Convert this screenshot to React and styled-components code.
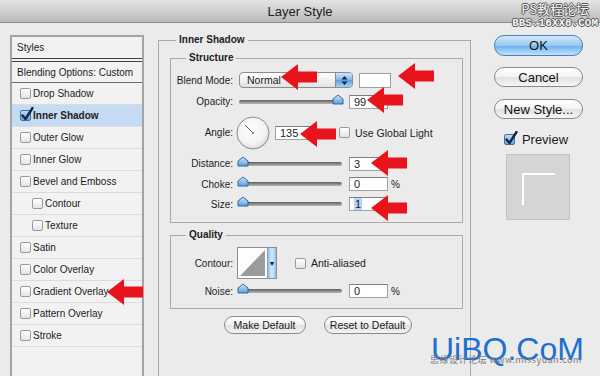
import React from 'react'
import styled, {createGlobalStyle} from 'styled-components'

const GlobalStyle = createGlobalStyle`
  html, body { margin: 0; padding: 0; }
  body {
    width: 600px;
    height: 376px;
    overflow: hidden;
    background: #ebebeb;
    font-family: "Liberation Sans", Arial, sans-serif;
    color: #1c1c1c;
  }
`

const Window = styled.div`
  position: relative;
  width: 600px;
  height: 376px;
  overflow: hidden;
  background: #ebebeb;
`

const TitleBar = styled.div`
  height: 22px;
  display: flex;
  align-items: center;
  justify-content: center;
  background: linear-gradient(#e4e4e4, #bababa);
  border-bottom: 1px solid #8e8e8e;
  font-size: 13px;
  color: #222;
`

const Body = styled.div`
  display: flex;
  align-items: flex-start;
  padding: 10px 0 0 10px;
`

/* ---------- left styles list ---------- */

const StylesPanel = styled.div`
  flex-shrink: 0;
  box-sizing: border-box;
  width: 134px;
  height: 360px;
  margin-top: 2px;
  border: 2px solid #a4a4a4;
  background: #f2f2f2;
  font-size: 10px;
`

const PanelHead = styled.div`
  height: 21px;
  display: flex;
  align-items: center;
  padding-left: 5px;
`

const DoubleRule = styled.div`
  height: 2px;
  border-top: 1px solid #404040;
  border-bottom: 1px solid #404040;
`

const BlendingRow = styled.div`
  height: 20px;
  display: flex;
  align-items: center;
  padding-left: 5px;
  border-bottom: 1px solid #6e6e6e;
`

const Item = styled.div`
  height: 21px;
  display: flex;
  align-items: center;
  gap: 2px;
  padding-left: ${p => (p.$indent ? 20 : 8)}px;
  border-bottom: 1px solid #dcdcdc;
  background: ${p => (p.$active ? '#c5dbf3' : 'transparent')};
  font-weight: ${p => (p.$active ? 'bold' : 'normal')};
`

const Box = styled.span`
  position: relative;
  flex-shrink: 0;
  box-sizing: border-box;
  width: 11px;
  height: 11px;
  border: 1px solid ${p => (p.$checked ? '#4a6f99' : '#9a9a9a')};
  border-radius: 2px;
  background: ${p => (p.$checked ? 'linear-gradient(#bcdcf8, #6aa8e4)' : 'linear-gradient(#ffffff, #e4e4e4)')};
`

const Tick = styled.svg`
  position: absolute;
  left: 0;
  top: -4px;
`

const Checkbox = ({checked}) => (
  <Box $checked={checked}>
    {checked && (
      <Tick width="13" height="14" viewBox="0 0 13 14">
        <path d="M1.5 8.5 L4.5 12 L11.5 1" fill="none" stroke="#12284a" strokeWidth="2.4" strokeLinecap="round" strokeLinejoin="round" />
      </Tick>
    )}
  </Box>
)

/* ---------- middle settings ---------- */

const EffectSet = styled.fieldset`
  flex-shrink: 0;
  box-sizing: border-box;
  width: 313px;
  min-width: 0;
  min-height: 380px;
  margin: 0 0 0 14px;
  padding: 0 7px 0 11px;
  border: 1px solid #aaaaaa;
`

const Legend = styled.legend`
  font-size: 10px;
  font-weight: bold;
  line-height: 14px;
  padding: 0 3px;
  margin-left: ${p => p.$offset}px;
`

const Group = styled.fieldset`
  min-width: 0;
  margin: ${p => p.$top || 0}px 0 0 0;
  padding: ${p => p.$pad};
  border: 1px solid #aaaaaa;
`

const Row = styled.div`
  display: flex;
  align-items: center;
  height: ${p => p.$h}px;
  font-size: 10px;
`

const Label = styled.span`
  flex-shrink: 0;
  width: 62px;
  margin-right: ${p => p.$gap ?? 6}px;
  text-align: right;
`

const Select = styled.div`
  box-sizing: border-box;
  width: 114px;
  height: 16px;
  display: flex;
  align-items: center;
  border: 1px solid #8c8c8c;
  border-radius: 4px;
  background: linear-gradient(#ffffff, #f1f1f1 50%, #e2e2e2);
  font-size: 10.5px;
  overflow: hidden;
`

const SelectText = styled.span`
  flex: 1;
  padding-left: 7px;
`

const Stepper = styled.span`
  width: 16px;
  height: 100%;
  display: flex;
  align-items: center;
  justify-content: center;
  border-left: 1px solid #6f8fb4;
  background: linear-gradient(#d2e6fa, #7fb4e6 50%, #5c9edd 51%, #a9d1f6);
`

const Swatch = styled.span`
  box-sizing: border-box;
  width: 32px;
  height: 15px;
  margin-left: 6px;
  background: #fff;
  border: 1px solid #9d9d9d;
`

const Track = styled.div`
  position: relative;
  width: 103px;
  height: 4px;
  border-radius: 2px;
  background: linear-gradient(#5e5e5e, #b8b8b8);
`

const Thumb = styled.svg`
  position: absolute;
  top: -6px;
  left: ${p => p.$pos}px;
`

const Slider = ({value}) => (
  <Track>
    <Thumb $pos={value > 50 ? 93 : -2} width="12" height="11" viewBox="0 0 12 11">
      <defs>
        <linearGradient id="tg" x1="0" y1="0" x2="0" y2="1">
          <stop offset="0" stopColor="#cfe6fb" />
          <stop offset="1" stopColor="#5b9de0" />
        </linearGradient>
      </defs>
      <path d="M1 10 V5 L6 1 L11 5 V10 Z" fill="url(#tg)" stroke="#35679e" strokeWidth="1" />
    </Thumb>
  </Track>
)

const Field = styled.span`
  box-sizing: border-box;
  width: ${p => p.$w || 39}px;
  height: 14px;
  margin-left: ${p => p.$ml ?? 6}px;
  padding-left: 4px;
  display: flex;
  align-items: center;
  background: #fff;
  border: 1px solid #a2a2a2;
  border-top-color: #7d7d7d;
  font-size: 11px;
`

const Picked = styled.span`
  background: #b6d4fb;
  padding: 0 1px;
`

const Unit = styled.span`
  margin-left: 3px;
  font-size: 10px;
`

const Dial = styled.svg`
  margin-left: -3px;
`

const Option = styled.span`
  display: flex;
  align-items: center;
  gap: 5px;
  margin-left: ${p => p.$ml}px;
  font-size: 10.5px;
`

const ContourPick = styled.div`
  display: flex;
  height: 30px;
  margin-left: -2px;
  border: 1px solid #8e8e8e;
`

const ContourDrop = styled.span`
  width: 8px;
  display: flex;
  align-items: center;
  justify-content: center;
  border-left: 1px solid #7c9cc0;
  background: linear-gradient(90deg, #8fc0ee, #d8ebfb, #8fc0ee);
  font-size: 7px;
  color: #0e1e36;
`

const ButtonRow = styled.div`
  display: flex;
  justify-content: center;
  gap: 18px;
  margin-top: 7px;
  padding-left: 2px;
`

const SmallButton = styled.button`
  box-sizing: border-box;
  width: ${p => p.$w}px;
  height: 18px;
  padding: 0;
  border: 1px solid #8a8a8a;
  border-radius: 9px;
  background: linear-gradient(#ffffff, #f0f0f0 50%, #e0e0e0 51%, #f4f4f4);
  font-family: inherit;
  font-size: 10.5px;
  color: #1c1c1c;
`

/* ---------- right column ---------- */

const Side = styled.div`
  flex-shrink: 0;
  width: 89px;
  margin: 2px 0 0 23px;
  display: flex;
  flex-direction: column;
  align-items: center;
`

const PushButton = styled.button`
  box-sizing: border-box;
  width: 89px;
  height: ${p => p.$h || 20}px;
  margin-top: ${p => p.$mt || 0}px;
  padding: 0;
  border: 1px solid ${p => (p.$primary ? '#4f7fb4' : '#8a8a8a')};
  border-radius: 10px;
  background: ${p =>
    p.$primary
      ? 'linear-gradient(#d3e8fc, #98c8f2 50%, #6cb0ec 51%, #bfe1fd)'
      : 'linear-gradient(#ffffff, #f2f2f2 50%, #e1e1e1 51%, #f6f6f6)'};
  font-family: inherit;
  font-size: 13px;
  color: #111;
`

const PreviewToggle = styled.div`
  display: flex;
  align-items: center;
  gap: 7px;
  margin-top: 13px;
  margin-left: -5px;
  font-size: 13px;
`

const PreviewBox = styled.div`
  box-sizing: border-box;
  width: 64px;
  height: 66px;
  margin-top: 7px;
  margin-left: -2px;
  padding: 18px 0 0 15px;
  background: #d5d5d5;
  border: 1px solid #c2c2c2;
`

const PreviewCorner = styled.div`
  width: 31px;
  height: 30px;
  border-top: 2px solid #fff;
  border-left: 2px solid #fff;
`

/* ---------- overlays ---------- */

const ArrowMark = styled.svg`
  position: absolute;
  left: ${p => p.$x}px;
  top: ${p => p.$y}px;
`

const Arrow = ({x, y}) => (
  <ArrowMark $x={x} $y={y} width="36" height="26" viewBox="0 0 36 26">
    <path d="M0 13 L17 0 L17 7.5 L36 7.5 L36 18.5 L17 18.5 L17 26 Z" fill="#e9131b" />
  </ArrowMark>
)

const TopMark = styled.div`
  position: absolute;
  right: 2px;
  top: 2px;
  display: flex;
  flex-direction: column;
  align-items: flex-end;
  color: #f6f6f6;
  text-shadow: 1px 0 #555, -1px 0 #555, 0 1px #555, 0 -1px #555;
  line-height: 1;
`

const TopMarkCn = styled.span`
  font-family: "Noto Sans CJK SC", sans-serif;
  font-size: 13px;
  margin-right: 9px;
`

const TopMarkUrl = styled.span`
  margin-top: 3px;
  font-family: "Liberation Mono", monospace;
  font-size: 11px;
  font-weight: bold;
`

const BrandMark = styled.div`
  position: absolute;
  left: 431px;
  top: 331px;
  font-size: 32px;
  color: #1f6fd0;
  line-height: 36px;
`

const BrandSub = styled.div`
  position: absolute;
  left: 430px;
  top: 353px;
  font-family: "Noto Sans CJK SC", sans-serif;
  font-size: 9px;
  color: #7a7a7a;
  letter-spacing: 0.5px;
`

const listItems = [
    {name: 'Drop Shadow'},
    {name: 'Inner Shadow', checked: true},
    {name: 'Outer Glow'},
    {name: 'Inner Glow'},
    {name: 'Bevel and Emboss'},
    {name: 'Contour', indent: true},
    {name: 'Texture', indent: true},
    {name: 'Satin'},
    {name: 'Color Overlay'},
    {name: 'Gradient Overlay'},
    {name: 'Pattern Overlay'},
    {name: 'Stroke'},
]

const App = () => (
    <Window>
        <GlobalStyle />
        <TitleBar>Layer Style</TitleBar>
        <Body>
            <StylesPanel>
                <PanelHead>Styles</PanelHead>
                <DoubleRule />
                <BlendingRow>Blending Options: Custom</BlendingRow>
                {listItems.map(it => (
                    <Item key={it.name} $indent={it.indent} $active={it.checked}>
                        <Checkbox checked={it.checked} />
                        {it.name}
                    </Item>
                ))}
            </StylesPanel>

            <EffectSet>
                <Legend $offset={6}>Inner Shadow</Legend>
                <Group $top={4} $pad="4px 8px 8px 0">
                    <Legend $offset={15}>Structure</Legend>
                    <Row $h={22}>
                        <Label>Blend Mode:</Label>
                        <Select>
                            <SelectText>Normal</SelectText>
                            <Stepper>
                                <svg width="7" height="11" viewBox="0 0 7 11">
                                    <path d="M3.5 1 L6.5 4.5 H0.5 Z M3.5 10 L6.5 6.5 H0.5 Z" fill="#10233f" />
                                </svg>
                            </Stepper>
                        </Select>
                        <Swatch />
                    </Row>
                    <Row $h={21}>
                        <Label>Opacity:</Label>
                        <Slider value={99} />
                        <Field $ml={7}>99</Field>
                    </Row>
                    <Row $h={41}>
                        <Label>Angle:</Label>
                        <Dial width="34" height="34" viewBox="0 0 34 34">
                            <defs>
                                <radialGradient id="dg" cx="0.45" cy="0.4" r="0.65">
                                    <stop offset="0" stopColor="#ffffff" />
                                    <stop offset="0.7" stopColor="#f2f2f2" />
                                    <stop offset="1" stopColor="#d0d0d0" />
                                </radialGradient>
                            </defs>
                            <circle cx="17" cy="17" r="16" fill="url(#dg)" stroke="#8a8a8a" />
                            <line x1="17" y1="17" x2="9" y2="9" stroke="#555" strokeWidth="1" />
                            <circle cx="17" cy="17" r="1" fill="#777" />
                        </Dial>
                        <Field $w={37} $ml={5}>135</Field>
                        <Option $ml={27}>
                            <Checkbox />
                            Use Global Light
                        </Option>
                    </Row>
                    <Row $h={21}>
                        <Label>Distance:</Label>
                        <Slider value={3} />
                        <Field $ml={7}>3</Field>
                    </Row>
                    <Row $h={20}>
                        <Label>Choke:</Label>
                        <Slider value={0} />
                        <Field $ml={7}>0</Field>
                        <Unit>%</Unit>
                    </Row>
                    <Row $h={20}>
                        <Label>Size:</Label>
                        <Slider value={1} />
                        <Field $ml={7}><Picked>1</Picked></Field>
                    </Row>
                </Group>

                <Group $top={5} $pad="4px 8px 6px 0">
                    <Legend $offset={15}>Quality</Legend>
                    <Row $h={34}>
                        <Label>Contour:</Label>
                        <ContourPick>
                            <svg width="29" height="30" viewBox="0 0 29 30">
                                <rect width="29" height="30" fill="#fdfdfd" />
                                <path d="M2 28 L27 2 V28 Z" fill="#9b9b9b" />
                            </svg>
                            <ContourDrop>▼</ContourDrop>
                        </ContourPick>
                        <Option $ml={18}>
                            <Checkbox />
                            Anti-aliased
                        </Option>
                    </Row>
                    <Row $h={22}>
                        <Label>Noise:</Label>
                        <Slider value={0} />
                        <Field $ml={7}>0</Field>
                        <Unit>%</Unit>
                    </Row>
                </Group>

                <ButtonRow>
                    <SmallButton $w={82}>Make Default</SmallButton>
                    <SmallButton $w={88}>Reset to Default</SmallButton>
                </ButtonRow>
            </EffectSet>

            <Side>
                <PushButton $primary $h={21}>OK</PushButton>
                <PushButton $mt={11}>Cancel</PushButton>
                <PushButton $mt={12}>New Style...</PushButton>
                <PreviewToggle>
                    <Checkbox checked />
                    Preview
                </PreviewToggle>
                <PreviewBox>
                    <PreviewCorner />
                </PreviewBox>
            </Side>
        </Body>

        <Arrow x={281} y={64} />
        <Arrow x={398} y={63} />
        <Arrow x={367} y={87} />
        <Arrow x={300} y={121} />
        <Arrow x={371} y={150} />
        <Arrow x={371} y={195} />
        <Arrow x={107} y={279} />

        <TopMark>
            <TopMarkCn>PS教程论坛</TopMarkCn>
            <TopMarkUrl>BBS.16XX8.COM</TopMarkUrl>
        </TopMark>
        <BrandMark>UiBQ.CoM</BrandMark>
        <BrandSub>思缘设计论坛 www.missyuan.com</BrandSub>
    </Window>
)

export default App
